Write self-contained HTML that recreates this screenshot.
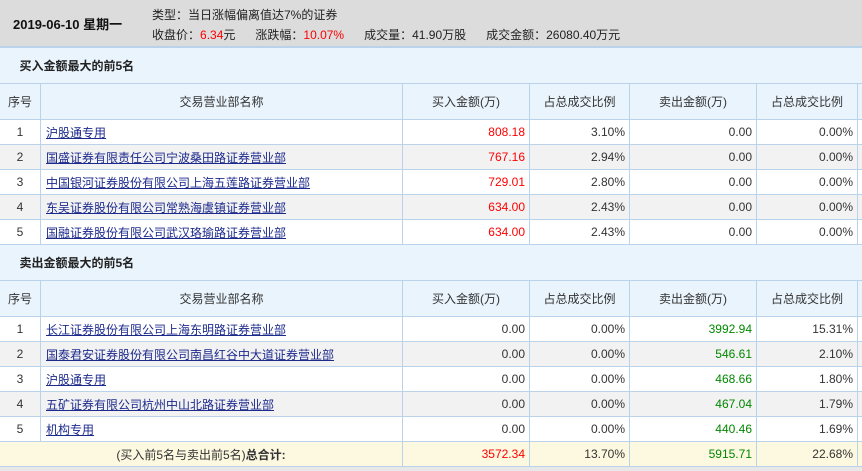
<!DOCTYPE html>
<html><head><meta charset="utf-8"><style>
*{margin:0;padding:0;box-sizing:border-box}
body{width:862px;height:471px;overflow:hidden;background:#e8e8e8;font-family:"Liberation Sans","Noto Sans CJK SC",sans-serif;font-size:12px;color:#333;position:relative}
.hd{position:absolute;left:0;top:0;width:862px;height:47px;background:#dcdcdc;border-bottom:1px solid #b9d3ea}
.hd .d{position:absolute;left:13px;top:14px;font-weight:bold;font-size:13px;color:#111}
.hd .l{position:absolute;left:152px;font-size:12px;color:#222;white-space:pre}
.r{color:#f00}
.g{color:#080}
table{position:absolute;left:-1px;border-collapse:collapse;table-layout:fixed;width:864px;background:#fff}
td{border:1px solid #b9d3ea;height:25px;padding:0 5px;white-space:nowrap;overflow:hidden}
td.c{text-align:center}
td.n{text-align:right;padding-right:4px}
tr.t td{background:#eaf4fd;height:36px;padding-left:20px;font-weight:bold;color:#222;border-left:none;border-right:none}
tr.h td{background:#eaf4fd;height:36px;text-align:center;color:#333}
tr.e td{background:#f2f2f2}
tr.s td{background:#fdf9e0}
a{color:#1c2a8c;text-decoration:underline}
</style></head><body>
<div class="hd"><div class="d">2019-06-10 星期一</div>
<div class="l" style="top:6px">类型：当日涨幅偏离值达7%的证券</div>
<div class="l" style="top:26px">收盘价：<span class="r">6.34</span>元      涨跌幅：<span class="r">10.07%</span>      成交量：41.90万股      成交金额：26080.40万元</div></div>
<table style="top:47px">
<colgroup><col style="width:41px"><col style="width:362px"><col style="width:127px"><col style="width:100px"><col style="width:127px"><col style="width:101px"><col style="width:6px"></colgroup>
<tr class="t"><td colspan="7">买入金额最大的前5名</td></tr>
<tr class="h"><td>序号</td><td>交易营业部名称</td><td>买入金额(万)</td><td>占总成交比例</td><td>卖出金额(万)</td><td>占总成交比例</td><td></td></tr>
<tr><td class="c">1</td><td><a>沪股通专用</a></td><td class="n r">808.18</td><td class="n">3.10%</td><td class="n">0.00</td><td class="n">0.00%</td><td></td></tr>
<tr class="e"><td class="c">2</td><td><a>国盛证券有限责任公司宁波桑田路证券营业部</a></td><td class="n r">767.16</td><td class="n">2.94%</td><td class="n">0.00</td><td class="n">0.00%</td><td></td></tr>
<tr><td class="c">3</td><td><a>中国银河证券股份有限公司上海五莲路证券营业部</a></td><td class="n r">729.01</td><td class="n">2.80%</td><td class="n">0.00</td><td class="n">0.00%</td><td></td></tr>
<tr class="e"><td class="c">4</td><td><a>东吴证券股份有限公司常熟海虞镇证券营业部</a></td><td class="n r">634.00</td><td class="n">2.43%</td><td class="n">0.00</td><td class="n">0.00%</td><td></td></tr>
<tr><td class="c">5</td><td><a>国融证券股份有限公司武汉珞瑜路证券营业部</a></td><td class="n r">634.00</td><td class="n">2.43%</td><td class="n">0.00</td><td class="n">0.00%</td><td></td></tr>
<tr class="t"><td colspan="7">卖出金额最大的前5名</td></tr>
<tr class="h"><td>序号</td><td>交易营业部名称</td><td>买入金额(万)</td><td>占总成交比例</td><td>卖出金额(万)</td><td>占总成交比例</td><td></td></tr>
<tr><td class="c">1</td><td><a>长江证券股份有限公司上海东明路证券营业部</a></td><td class="n">0.00</td><td class="n">0.00%</td><td class="n g">3992.94</td><td class="n">15.31%</td><td></td></tr>
<tr class="e"><td class="c">2</td><td><a>国泰君安证券股份有限公司南昌红谷中大道证券营业部</a></td><td class="n">0.00</td><td class="n">0.00%</td><td class="n g">546.61</td><td class="n">2.10%</td><td></td></tr>
<tr><td class="c">3</td><td><a>沪股通专用</a></td><td class="n">0.00</td><td class="n">0.00%</td><td class="n g">468.66</td><td class="n">1.80%</td><td></td></tr>
<tr class="e"><td class="c">4</td><td><a>五矿证券有限公司杭州中山北路证券营业部</a></td><td class="n">0.00</td><td class="n">0.00%</td><td class="n g">467.04</td><td class="n">1.79%</td><td></td></tr>
<tr><td class="c">5</td><td><a>机构专用</a></td><td class="n">0.00</td><td class="n">0.00%</td><td class="n g">440.46</td><td class="n">1.69%</td><td></td></tr>
<tr class="s"><td colspan="2" class="c">(买入前5名与卖出前5名)<b>总合计:</b></td><td class="n r">3572.34</td><td class="n">13.70%</td><td class="n g">5915.71</td><td class="n">22.68%</td><td></td></tr>
</table>
</body></html>
